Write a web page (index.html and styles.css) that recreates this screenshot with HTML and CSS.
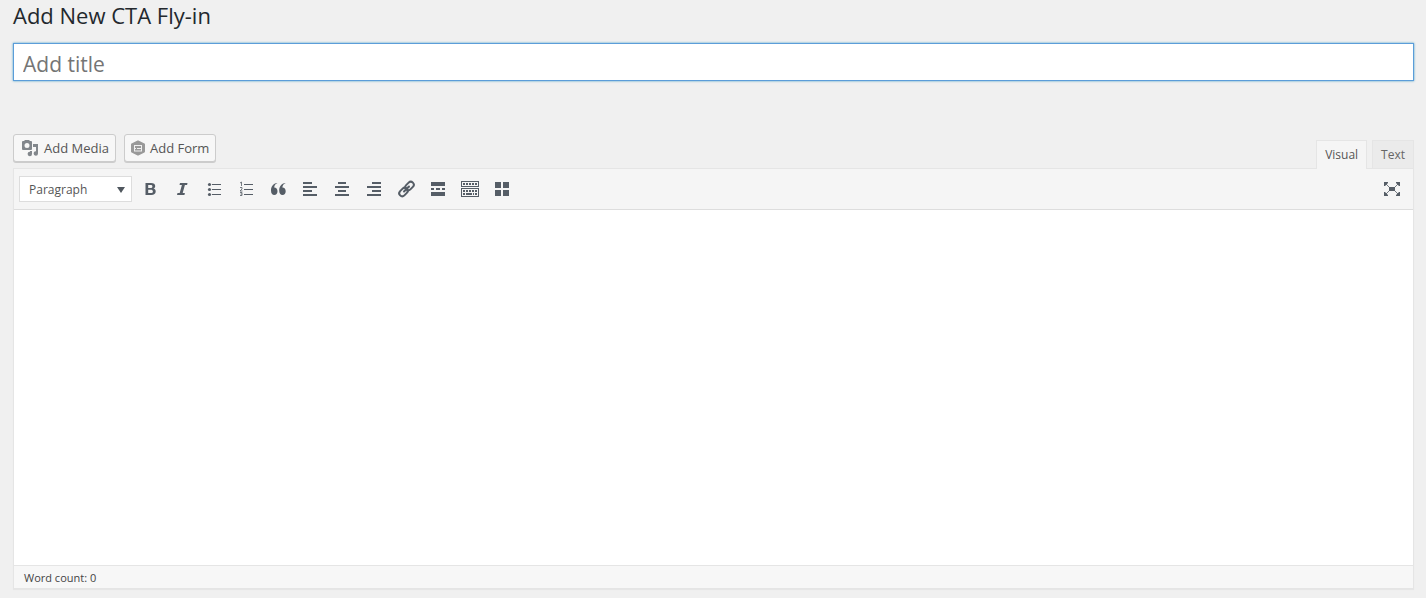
FILE: index.html
```html
<!DOCTYPE html>
<html lang="en">
<head>
<meta charset="utf-8">
<title>Add New CTA Fly-in</title>
<link rel="stylesheet" href="styles.css">
</head>
<body>
<main class="page">
  <h1 class="heading">Add New CTA Fly-in</h1>
  <input class="title-input" type="text" aria-label="Add title" placeholder="Add title">

  <div class="editor-tools">
    <div class="media-buttons">
      <button class="button" type="button">
        <svg class="media-icon" viewBox="0 0 18 18" aria-hidden="true">
          <path fill-rule="evenodd" d="M2 2h1l1-1h4l1 1h1a1 1 0 0 1 1 1v7a1 1 0 0 1-1 1H2a1 1 0 0 1-1-1V3a1 1 0 0 1 1-1zM6 4a2.500 2.500 0 1 0 0 5 2.500 2.500 0 0 0 0-5z"/>
          <path d="M12 5h5v9.500a2.200 2.200 0 1 1-2-2.200V8h-3zM9 12h2v3a2.200 2.200 0 1 1-2-2.200z"/>
        </svg>
        Add Media
      </button>
      <button class="button" type="button">
        <svg class="form-icon" viewBox="0 0 16 16" aria-hidden="true">
          <path class="form-shape" d="M8 1.500l6 3v7l-6 3-6-3v-7z"/>
          <path class="form-lines" d="M4 5.500h8M4 8.500h2M7 8.500h5M4 11h8M4.500 5v6M11.500 5v6"/>
        </svg>
        Add Form
      </button>
    </div>
    <div class="tabs">
      <button class="tab tab-active" type="button">Visual</button>
      <button class="tab" type="button">Text</button>
    </div>
  </div>

  <section class="editor">
    <div class="toolbar">
      <div class="format">
        <select class="format-select" aria-label="Text format"><option>Paragraph</option></select>
        <svg class="format-arrow" viewBox="0 0 8 6" aria-hidden="true"><path d="M0 0h8L4 6z"/></svg>
      </div>
      <button class="tool" type="button" aria-label="Bold"><svg viewBox="0 0 20 20"><path fill-rule="evenodd" d="M5.500 4H11c2.800 0 4.200 1 4.200 3 0 1.300-.7 2.200-1.900 2.600 1.500.3 2.400 1.300 2.400 2.900C15.700 14.800 14 16 11.300 16H5.500zM8.200 6v2.900h2.200c1.300 0 2-.5 2-1.500s-.7-1.400-2-1.400zm0 4.800V14h2.500c1.500 0 2.200-.5 2.200-1.600s-.8-1.600-2.200-1.600z"/></svg></button>
      <button class="tool" type="button" aria-label="Italic"><svg viewBox="0 0 20 20"><path d="M8 4h7.500l-.4 2h-2.200l-2.200 8h2.200l-.5 2H5l.5-2h2.200l2.200-8H7.500z"/></svg></button>
      <button class="tool" type="button" aria-label="Bulleted list"><svg viewBox="0 0 20 20"><path d="M8 5h9v1H8zM8 10h9v1H8zM8 15h9v1H8z"/><circle cx="5.500" cy="5.500" r="1.600"/><circle cx="5.500" cy="10.500" r="1.600"/><circle cx="5.500" cy="15.500" r="1.600"/></svg></button>
      <button class="tool" type="button" aria-label="Numbered list"><svg viewBox="0 0 20 20"><path d="M8 5h9v1H8zM8 10h9v1H8zM8 15h9v1H8z"/><path class="thin" d="M4 4l1.500-1v4M4 8.500h2v1.500l-2 2h2.500M4 13.500h2v3H4M4.500 15H6"/></svg></button>
      <button class="tool" type="button" aria-label="Blockquote"><svg viewBox="0 0 20 20"><path d="M9.200 4.200C7 5.200 6.300 6.700 6.200 8.500c2 0 3.300 1.500 3.300 3.700S8.200 16 6.300 16C4.200 16 3 14.300 3 11.500c0-4 2.200-7 6.200-7.500zM17.400 4.200c-2.200 1-2.900 2.500-3 4.300 2 0 3.300 1.500 3.300 3.700S16.400 16 14.500 16c-2.100 0-3.300-1.700-3.300-4.500 0-4 2.200-7 6.200-7.500z"/></svg></button>
      <button class="tool" type="button" aria-label="Align left"><svg viewBox="0 0 20 20"><path d="M3 3h9v2H3zM3 7h14v2H3zM3 11h9v2H3zM3 15h14v2H3z"/></svg></button>
      <button class="tool" type="button" aria-label="Align center"><svg viewBox="0 0 20 20"><path d="M6 3h8v2H6zM3 7h14v2H3zM6 11h8v2H6zM3 15h14v2H3z"/></svg></button>
      <button class="tool" type="button" aria-label="Align right"><svg viewBox="0 0 20 20"><path d="M8 3h9v2H8zM3 7h14v2H3zM8 11h9v2H8zM3 15h14v2H3z"/></svg></button>
      <button class="tool" type="button" aria-label="Insert link"><svg viewBox="0 0 20 20"><g class="link" transform="rotate(-45 10.500 10)"><rect x="1.500" y="7" width="9.500" height="6" rx="3"/><rect x="10" y="7" width="9.500" height="6" rx="3"/><path d="M7 10h7"/></g></svg></button>
      <button class="tool" type="button" aria-label="Insert Read More tag"><svg viewBox="0 0 20 20"><path d="M3 3h14v4H3zM3 9h3v2H3zM8 9h4v2H8zM14 9h3v2h-3zM3 13h14v4H3z"/></svg></button>
      <button class="tool" type="button" aria-label="Toolbar toggle"><svg viewBox="0 0 20 20"><path fill-rule="evenodd" d="M1 2h18v6H1zM2 3v4h16V3zM1 9h18v9H1zM2 10v7h16v-7z"/><path d="M3 4h2v2H3zM6 4h2v2H6zM9 4h2v2H9zM12 4h2v2h-2zM15 4h2v2h-2zM3 11h2v2H3zM6 11h2v2H6zM9 11h2v2H9zM12 11h2v2h-2zM15 11h2v2h-2zM3 14h2v2H3zM6 14h6v2H6zM13 14h1v2h-1zM15 14h2v2h-2z"/></svg></button>
      <button class="tool" type="button" aria-label="Insert grid"><svg viewBox="0 0 20 20"><path d="M3 3h6v6H3zM11 3h6v6h-6zM3 11h6v6H3zM11 11h6v6h-6z"/></svg></button>
      <button class="tool tool-end" type="button" aria-label="Distraction-free writing mode"><svg viewBox="0 0 20 20"><path d="M7 8h6v4H7zM2 3h4v1L3 7H2zM18 3h-4v1l3 3h1zM2 17h4v-1l-3-3H2zM18 17h-4v-1l3-3h1z"/><path class="thin" d="M3 4l4 4M17 4l-4 4M3 16l4-4M17 16l-4-4"/></svg></button>
    </div>
    <textarea class="content" aria-label="Content"></textarea>
    <div class="status">Word count: 0</div>
  </section>
</main>
</body>
</html>
```

FILE: styles.css
```css
* {
  box-sizing: border-box;
}

body {
  margin: 0;
  background: #f0f0f0;
  color: #444;
  font: 12px/18px "Open Sans", "Noto Sans", sans-serif;
}

button,
input,
select,
textarea {
  margin: 0;
  font: inherit;
}

.page {
  display: flex;
  flex-direction: column;
  min-height: 100vh;
  padding: 0 12px 9px 13px;
}

.heading {
  margin: 0;
  color: #23282d;
  font-size: 22px;
  font-weight: 400;
  line-height: 30px;
}

.title-input {
  width: 100%;
  height: 38px;
  margin-top: 13px;
  padding: 3px 9px 0;
  border: 1px solid #5b9dd9;
  outline: 0;
  background: #fff;
  box-shadow: 0 0 2px rgba(30, 140, 190, 0.8);
  color: #32373c;
  font-size: 21px;
}

.title-input::placeholder {
  color: #757575;
  opacity: 1;
}

.editor-tools {
  display: flex;
  justify-content: space-between;
  align-items: flex-end;
  margin-top: 53px;
}

.media-buttons {
  display: flex;
  gap: 8px;
  padding-bottom: 6px;
}

.button {
  display: flex;
  align-items: center;
  height: 28px;
  padding: 0 6px 0 5px;
  border: 1px solid #ccc;
  border-radius: 3px;
  background: #f7f7f7;
  box-shadow: 0 1px 0 #ccc;
  color: #555;
  font-size: 13px;
}

.media-icon {
  width: 18px;
  height: 18px;
  margin: 0 5px 0 2px;
  fill: #82878c;
}

.form-icon {
  width: 16px;
  height: 16px;
  margin-right: 4px;
}

.form-shape {
  fill: #999;
  stroke: #999;
  stroke-width: 2;
  stroke-linejoin: round;
}

.form-lines {
  fill: none;
  stroke: #f0f0f0;
}

.tabs {
  display: flex;
  gap: 5px;
}

.tab {
  height: 28px;
  padding: 0 8px;
  border: 1px solid #e5e5e5;
  border-bottom: 0;
  background: #ebebeb;
  color: #666;
}

.tab-active {
  position: relative;
  z-index: 1;
  height: 29px;
  margin-bottom: -1px;
  background: #f5f5f5;
  color: #555;
}

.editor {
  display: flex;
  flex: 1;
  flex-direction: column;
  border: 1px solid #e5e5e5;
  box-shadow: 0 1px 1px rgba(0, 0, 0, 0.04);
}

.toolbar {
  display: flex;
  align-items: center;
  gap: 12px;
  height: 41px;
  padding: 0 11px 0 5px;
  border-bottom: 1px solid #ddd;
  background: #f5f5f5;
}

.format {
  position: relative;
  margin-right: -4px;
}

.format-select {
  display: block;
  width: 113px;
  height: 26px;
  padding: 2px 9px 0;
  border: 1px solid #ddd;
  border-radius: 0;
  appearance: none;
  background: #fff;
  color: #555;
}

.format-arrow {
  position: absolute;
  top: 11px;
  right: 7px;
  width: 8px;
  height: 6px;
  fill: #50575e;
  pointer-events: none;
}

.tool {
  width: 20px;
  height: 20px;
  padding: 0;
  border: 0;
  background: none;
}

.tool svg {
  display: block;
  width: 20px;
  height: 20px;
  fill: #555d66;
}

.tool-end {
  margin-left: auto;
}

.tool .thin {
  fill: none;
  stroke: #555d66;
  stroke-width: 0.8;
}

.tool .link {
  fill: none;
  stroke: #555d66;
  stroke-width: 2;
  stroke-linecap: round;
}

.content {
  display: block;
  flex: 1;
  width: 100%;
  padding: 10px;
  border: 0;
  outline: 0;
  resize: none;
  background: #fff;
}

.status {
  padding: 3px 10px 1px;
  border-top: 1px solid #e5e5e5;
  background: #f7f7f7;
  font-size: 11px;
}
```
